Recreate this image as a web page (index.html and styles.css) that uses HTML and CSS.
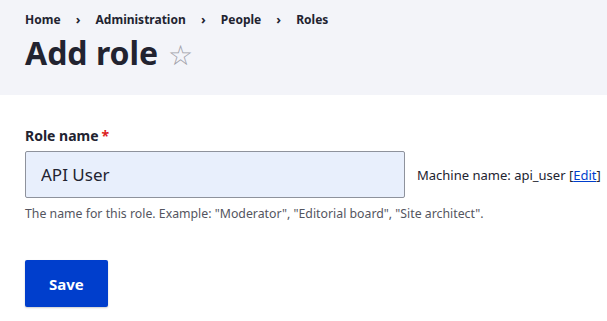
FILE: index.html
```html
<!DOCTYPE html>
<html lang="en">
<head>
    <meta charset="UTF-8">
    <title>Add role</title>
    <link rel="stylesheet" href="styles.css">
</head>
<body>
    <header class="page-header">
        <nav class="breadcrumb">
            <a href="#">Home</a>
            <span class="sep">›</span>
            <a href="#">Administration</a>
            <span class="sep">›</span>
            <a href="#">People</a>
            <span class="sep">›</span>
            <a href="#">Roles</a>
        </nav>
        <h1 class="page-title">Add role <span class="star">☆</span></h1>
    </header>

    <main class="content">
        <form class="role-form">
            <label class="form-label" for="role-name">Role name<span class="required">*</span></label>
            <div class="field-row">
                <input type="text" id="role-name" class="form-text" value="API User">
                <span class="machine-name">Machine name: api_user [<a href="#">Edit</a>]</span>
            </div>
            <div class="description">The name for this role. Example: "Moderator", "Editorial board", "Site architect".</div>
            <button type="submit" class="button-primary">Save</button>
        </form>
    </main>
</body>
</html>
```

FILE: styles.css
```css
body {
    margin: 0;
    font-family: "Noto Sans", "Open Sans", sans-serif;
    color: #222330;
    background: #fff;
}

.page-header {
    background-color: #f3f4f9;
    padding: 10px 25px 0;
    height: 85px;
}

.breadcrumb {
    font-size: 12px;
    font-weight: bold;
    line-height: 18px;
}

.breadcrumb a {
    color: #222330;
    text-decoration: none;
}

.breadcrumb .sep {
    padding: 0 12px;
    font-size: 13px;
}

.page-title {
    margin: 4px 0 0;
    font-size: 32px;
    line-height: 40px;
    font-weight: bold;
}

.star {
    font-weight: normal;
    color: #a0a0a8;
    font-size: 28px;
    margin-left: 1px;
}

.content {
    padding: 32px 25px 10px;
}

.form-label {
    display: block;
    font-size: 14px;
    font-weight: bold;
    line-height: 18px;
    margin-bottom: 6px;
}

.required {
    color: #dc2323;
    margin-left: 3px;
}

.field-row {
    display: flex;
    align-items: center;
}

.form-text {
    flex-shrink: 0;
    box-sizing: border-box;
    width: 380px;
    height: 47px;
    padding: 0 15px;
    border: 1px solid #8e929c;
    border-radius: 2px;
    background-color: #e8effc;
    font-family: inherit;
    font-size: 17px;
    color: #222330;
}

.machine-name {
    margin-left: 12px;
    font-size: 13px;
    white-space: nowrap;
    color: #222330;
}

.machine-name a {
    color: #003ecc;
}

.description {
    margin-top: 7px;
    font-size: 12.3px;
    color: #545560;
}

.button-primary {
    display: block;
    margin-top: 38px;
    padding: 0 24px;
    height: 47px;
    border: none;
    border-radius: 2px;
    background-color: #003ecc;
    color: #fff;
    font-family: inherit;
    font-size: 15px;
    font-weight: bold;
    box-shadow: 0 1px 2px rgba(0, 0, 0, 0.2);
}
```
